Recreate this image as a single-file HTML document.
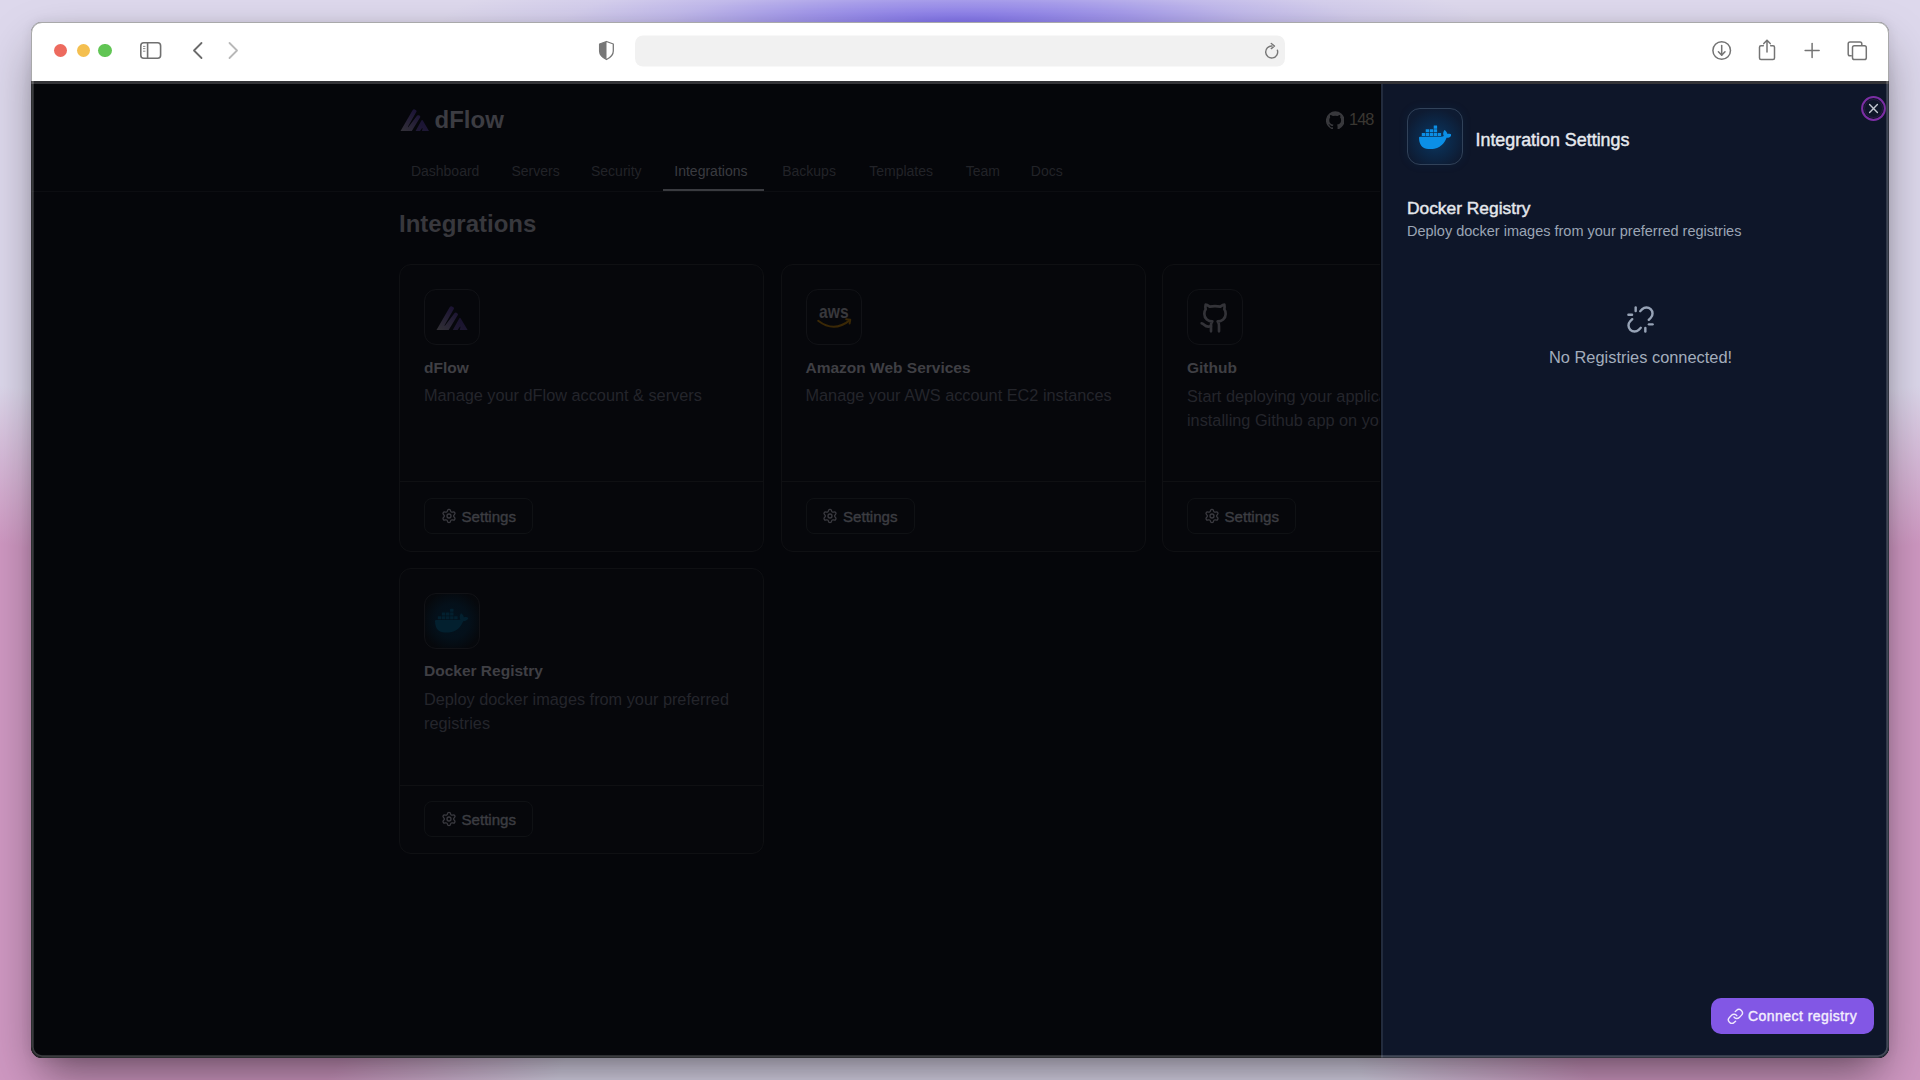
<!DOCTYPE html>
<html><head><meta charset="utf-8">
<style>
*{box-sizing:border-box;margin:0;padding:0}
html,body{width:1920px;height:1080px;overflow:hidden}
body{position:relative;font-family:"Liberation Sans",sans-serif;
background:
 radial-gradient(ellipse 560px 70px at 960px 24px, rgba(130,116,234,1) 0%, rgba(130,116,234,0.97) 6%, rgba(130,116,234,0.62) 32%, rgba(130,116,234,0.3) 52%, rgba(130,116,234,0.1) 71%, rgba(130,116,234,0) 93%),
 radial-gradient(ellipse 700px 520px at -100px 900px, rgba(207,152,194,1) 0%, rgba(207,152,194,1) 70%, rgba(207,152,194,0) 100%),
 radial-gradient(ellipse 700px 520px at 2020px 900px, rgba(207,152,194,1) 0%, rgba(207,152,194,1) 70%, rgba(207,152,194,0) 100%),
 #ddd8ec;
}
.abs{position:absolute}
.win{position:absolute;left:31px;top:22px;width:1858px;height:1036px;border-radius:11px;overflow:hidden;
 box-shadow:0 0 12px rgba(0,0,0,0.08), 0 22px 50px -6px rgba(0,0,0,0.4), 0 30px 30px -20px rgba(0,0,0,0.12);background:#05060a}
.inner{position:absolute;left:-31px;top:-22px;width:1920px;height:1080px}
.frame{position:absolute;left:31px;top:21.6px;width:1858px;height:1036.6px;border-radius:11px;border:1.4px solid rgba(83,83,86,0.5);box-shadow:inset 0 0 0 1.7px rgba(255,255,255,0.22);pointer-events:none}
.t{position:absolute;white-space:nowrap;line-height:1}
</style></head>
<body>
<div class="win"><div class="inner">
<div class="abs" style="left:0;top:0;width:1920px;height:81px;background:#fff"></div>
<div class="abs" style="left:0;top:81px;width:1920px;height:3px;background:#343438"></div>
<div class="abs" style="left:0;top:84px;width:1920px;height:1000px;background:#05060a"></div>
<div class="abs" style="left:54.3px;top:43.9px;width:13.2px;height:13.2px;border-radius:50%;background:#ed6a5e"></div>
<div class="abs" style="left:76.5px;top:43.9px;width:13.2px;height:13.2px;border-radius:50%;background:#f4bf4f"></div>
<div class="abs" style="left:98.4px;top:43.9px;width:13.2px;height:13.2px;border-radius:50%;background:#61c554"></div>
<svg class="abs" style="left:0;top:0" width="1920" height="81" viewBox="0 0 1920 81" fill="none">
 <rect x="140.8" y="42.8" width="19.8" height="15.4" rx="3" stroke="#707070" stroke-width="1.6"/>
 <line x1="147.6" y1="42.8" x2="147.6" y2="58.2" stroke="#707070" stroke-width="1.6"/>
 <line x1="143" y1="46.4" x2="145.4" y2="46.4" stroke="#808080" stroke-width="0.9"/>
 <line x1="143" y1="48.6" x2="145.4" y2="48.6" stroke="#808080" stroke-width="0.9"/>
 <line x1="143" y1="51.2" x2="145.4" y2="51.2" stroke="#808080" stroke-width="0.9"/>
 <polyline points="201.5,43 194,50.5 201.5,58" stroke="#6b6b6b" stroke-width="1.8" stroke-linecap="round" stroke-linejoin="round"/>
 <polyline points="229.5,43 237,50.5 229.5,58" stroke="#b8b8b8" stroke-width="1.8" stroke-linecap="round" stroke-linejoin="round"/>
 <path d="M606.5 41.5 L613.3 44 V51 C613.3 55 610 57.8 606.5 59.5 C603 57.8 599.6 55 599.6 51 V44 Z" stroke="#777" stroke-width="1.3" stroke-linejoin="round"/>
 <path d="M606.5 41.5 L599.6 44 V51 C599.6 55 603 57.8 606.5 59.5 Z" fill="#777"/>
 <rect x="635" y="35.5" width="650" height="31" rx="8" fill="#f1f1f1"/>
 <path d="M1277.4 50.2 A6 6 0 1 1 1272 46" stroke="#777" stroke-width="1.4" stroke-linecap="round"/>
 <polyline points="1271.3,43.5 1274.5,46 1271.3,48.6" stroke="#777" stroke-width="1.4" stroke-linecap="round" stroke-linejoin="round"/>
 <circle cx="1721.7" cy="50.5" r="8.8" stroke="#747474" stroke-width="1.5"/>
 <line x1="1721.7" y1="45.5" x2="1721.7" y2="55" stroke="#747474" stroke-width="1.5" stroke-linecap="round"/>
 <polyline points="1718.4,51.8 1721.7,55.1 1725,51.8" stroke="#747474" stroke-width="1.5" stroke-linecap="round" stroke-linejoin="round"/>
 <path d="M1763.3 45.8 H1761 A1.5 1.5 0 0 0 1759.5 47.3 V58 A1.5 1.5 0 0 0 1761 59.5 H1773 A1.5 1.5 0 0 0 1774.5 58 V47.3 A1.5 1.5 0 0 0 1773 45.8 H1770.7" stroke="#747474" stroke-width="1.5" stroke-linecap="round"/>
 <line x1="1767" y1="40.5" x2="1767" y2="52" stroke="#747474" stroke-width="1.5" stroke-linecap="round"/>
 <polyline points="1763.8,43.6 1767,40.3 1770.2,43.6" stroke="#747474" stroke-width="1.5" stroke-linecap="round" stroke-linejoin="round"/>
 <line x1="1812.1" y1="43.5" x2="1812.1" y2="57.5" stroke="#747474" stroke-width="1.5" stroke-linecap="round"/>
 <line x1="1805.1" y1="50.5" x2="1819.1" y2="50.5" stroke="#747474" stroke-width="1.5" stroke-linecap="round"/>
 <path d="M1851.8 55.7 H1850 A1.8 1.8 0 0 1 1848.2 53.9 V43.8 A1.8 1.8 0 0 1 1850 42 H1860 A1.8 1.8 0 0 1 1861.8 43.8 V45.5" stroke="#747474" stroke-width="1.5"/>
 <rect x="1852.5" y="45.8" width="13.8" height="13.7" rx="1.8" stroke="#747474" stroke-width="1.5"/>
</svg>
<svg class="abs" style="left:399.7px;top:108.6px" width="29.5" height="22.5" viewBox="0 0 32 24.3">
<defs><linearGradient id="lg1" x1="0" y1="1" x2="0.6" y2="0"><stop offset="0" stop-color="#333138"/><stop offset="1" stop-color="#1c1436"/></linearGradient>
<linearGradient id="lg2" x1="0" y1="1" x2="0.5" y2="0"><stop offset="0" stop-color="#1f1934"/><stop offset="1" stop-color="#1a1334"/></linearGradient></defs>
<path d="M0.3 24.3 L13.8 1.1 Q14.6 -0.1 16 0.4 L17.4 1.2 Q18.3 2 17.8 3 L8.6 19.3 Q8.4 20.1 9.1 19.6 L18.6 7.1 Q19.4 6.3 20.5 6.8 L21.5 7.4 Q22.3 8.1 21.8 9.1 L12.5 24.3 Z" fill="url(#lg1)"/>
<path d="M16.6 24.3 L23.4 12.2 Q24 11.3 24.6 12.2 L31.8 24.3 L23.7 24.3 L24.5 21 Q24.4 20.2 23.8 20.7 L21.4 24.3 Z" fill="url(#lg2)"/></svg>
<div class="t" style="left:434.5px;top:108px;font-size:24px;font-weight:700;color:#3c3c42;">dFlow</div>

<svg class="abs" style="left:1325.8px;top:110.6px" width="18.6" height="18.6" viewBox="0 0 24 24" fill="#38383c"><path d="M12 .3a12 12 0 0 0-3.8 23.4c.6.1.8-.3.8-.6v-2c-3.3.7-4-1.6-4-1.6-.6-1.4-1.4-1.8-1.4-1.8-1-.7.1-.7.1-.7 1.2.1 1.8 1.2 1.8 1.2 1 1.8 2.8 1.3 3.5 1 0-.8.4-1.3.7-1.6-2.7-.3-5.5-1.3-5.5-6 0-1.2.5-2.3 1.3-3.1-.2-.4-.6-1.6 0-3.2 0 0 1-.3 3.4 1.2a11.5 11.5 0 0 1 6 0c2.3-1.5 3.3-1.2 3.3-1.2.6 1.6.2 2.8 0 3.2.9.8 1.3 1.9 1.3 3.2 0 4.6-2.8 5.6-5.5 5.9.5.4.9 1 .9 2.2v3.3c0 .3.1.7.8.6A12 12 0 0 0 12 .3"/></svg>
<div class="t" style="left:1349.0px;top:111px;font-size:16.3px;font-weight:400;color:#3a3732;letter-spacing:-0.9px">148</div>

<div class="t" style="left:410.9px;top:164px;font-size:14px;font-weight:400;color:#222328;width:71.3px">Dashboard</div>

<div class="t" style="left:511.5px;top:164px;font-size:14px;font-weight:400;color:#222328;width:50.5px">Servers</div>

<div class="t" style="left:591.0px;top:164px;font-size:14px;font-weight:400;color:#222328;width:54.2px">Security</div>

<div class="t" style="left:674.3px;top:164px;font-size:14px;font-weight:400;color:#3a3b40;width:79.2px">Integrations</div>

<div class="t" style="left:782.2px;top:164px;font-size:14px;font-weight:400;color:#222328;width:57.8px">Backups</div>

<div class="t" style="left:869.2px;top:164px;font-size:14px;font-weight:400;color:#222328;width:67.5px">Templates</div>

<div class="t" style="left:965.8px;top:164px;font-size:14px;font-weight:400;color:#222328;width:35.9px">Team</div>

<div class="t" style="left:1030.8px;top:164px;font-size:14px;font-weight:400;color:#222328;width:33.7px">Docs</div>

<div class="abs" style="left:31px;top:190.5px;width:1350px;height:1px;background:#0c0d11"></div>
<div class="abs" style="left:663px;top:189.3px;width:101px;height:2.2px;background:#3a3b40"></div>
<div class="t" style="left:399.0px;top:212px;font-size:24px;font-weight:700;color:#38383d;">Integrations</div>

<div class="abs" style="left:399px;top:264px;width:365px;height:288px;border:1px solid #0f1013;border-radius:12px;background:#06070b"></div>
<div class="abs" style="left:399px;top:481px;width:365px;height:1px;background:#0f1013"></div>
<div class="abs" style="left:424px;top:289px;width:56px;height:56px;border:1px solid #111216;border-radius:12px;background:#06070b"></div>
<svg class="abs" style="left:435.9px;top:305.5px" width="32" height="24.3" viewBox="0 0 32 24.3">
<defs><linearGradient id="cg1" x1="0" y1="1" x2="0.6" y2="0"><stop offset="0" stop-color="#323136"/><stop offset="1" stop-color="#1c1433"/></linearGradient>
<linearGradient id="cg2" x1="0" y1="1" x2="0.5" y2="0"><stop offset="0" stop-color="#1f1a30"/><stop offset="1" stop-color="#19122f"/></linearGradient></defs>
<path d="M0.3 24.3 L13.8 1.1 Q14.6 -0.1 16 0.4 L17.4 1.2 Q18.3 2 17.8 3 L8.6 19.3 Q8.4 20.1 9.1 19.6 L18.6 7.1 Q19.4 6.3 20.5 6.8 L21.5 7.4 Q22.3 8.1 21.8 9.1 L12.5 24.3 Z" fill="url(#cg1)"/>
<path d="M16.6 24.3 L23.4 12.2 Q24 11.3 24.6 12.2 L31.8 24.3 L23.7 24.3 L24.5 21 Q24.4 20.2 23.8 20.7 L21.4 24.3 Z" fill="url(#cg2)"/></svg>
<div class="t" style="left:424.0px;top:360px;font-size:15.5px;font-weight:700;color:#3f3f44;">dFlow</div>
<div class="t" style="left:424.0px;top:387px;font-size:16.3px;font-weight:400;color:#24252b;">Manage your dFlow account &amp; servers</div>
<div class="abs" style="left:424px;top:497.8px;width:109px;height:36px;border:1px solid #0f1114;border-radius:8px"></div>
<svg class="abs" style="left:440.5px;top:507.8px" width="16" height="16" viewBox="0 0 24 24" fill="none" stroke="#3a3a40" stroke-width="2" stroke-linecap="round" stroke-linejoin="round"><path d="M9.671 4.136a2.34 2.34 0 0 1 4.659 0 2.34 2.34 0 0 0 3.319 1.915 2.34 2.34 0 0 1 2.33 4.033 2.34 2.34 0 0 0 0 3.831 2.34 2.34 0 0 1-2.33 4.033 2.34 2.34 0 0 0-3.319 1.915 2.34 2.34 0 0 1-4.659 0 2.34 2.34 0 0 0-3.32-1.915 2.34 2.34 0 0 1-2.33-4.033 2.34 2.34 0 0 0 0-3.831A2.34 2.34 0 0 1 6.35 6.051a2.34 2.34 0 0 0 3.319-1.915"/><circle cx="12" cy="12" r="3"/></svg>
<div class="t" style="left:461.5px;top:509px;font-size:15.1px;font-weight:400;color:#3c3d42;-webkit-text-stroke:0.4px #3c3d42">Settings</div>

<div class="abs" style="left:780.5px;top:264px;width:365px;height:288px;border:1px solid #0f1013;border-radius:12px;background:#06070b"></div>
<div class="abs" style="left:780.5px;top:481px;width:365px;height:1px;background:#0f1013"></div>
<div class="abs" style="left:805.5px;top:289px;width:56px;height:56px;border:1px solid #111216;border-radius:12px;background:#06070b"></div>
<svg class="abs" style="left:815px;top:303px" width="38" height="28" viewBox="0 0 38 28">
<text x="4.1" y="14.8" font-family="Liberation Sans" font-weight="700" font-size="19" fill="#38383c" textLength="29.5" lengthAdjust="spacingAndGlyphs">aws</text>
<path d="M3.2 17.8 Q19 30 34.6 17.4" stroke="#3a2806" stroke-width="2" fill="none" stroke-linecap="round"/>
<path d="M31.2 16.3 L35.3 16.8 L34.6 20.6" stroke="#3a2806" stroke-width="1.9" fill="none" stroke-linecap="round" stroke-linejoin="round"/>
</svg>
<div class="t" style="left:805.5px;top:360px;font-size:15.5px;font-weight:700;color:#3f3f44;">Amazon Web Services</div>
<div class="t" style="left:805.5px;top:387px;font-size:16.3px;font-weight:400;color:#24252b;">Manage your AWS account EC2 instances</div>
<div class="abs" style="left:805.5px;top:497.8px;width:109px;height:36px;border:1px solid #0f1114;border-radius:8px"></div>
<svg class="abs" style="left:822.0px;top:507.8px" width="16" height="16" viewBox="0 0 24 24" fill="none" stroke="#3a3a40" stroke-width="2" stroke-linecap="round" stroke-linejoin="round"><path d="M9.671 4.136a2.34 2.34 0 0 1 4.659 0 2.34 2.34 0 0 0 3.319 1.915 2.34 2.34 0 0 1 2.33 4.033 2.34 2.34 0 0 0 0 3.831 2.34 2.34 0 0 1-2.33 4.033 2.34 2.34 0 0 0-3.319 1.915 2.34 2.34 0 0 1-4.659 0 2.34 2.34 0 0 0-3.32-1.915 2.34 2.34 0 0 1-2.33-4.033 2.34 2.34 0 0 0 0-3.831A2.34 2.34 0 0 1 6.35 6.051a2.34 2.34 0 0 0 3.319-1.915"/><circle cx="12" cy="12" r="3"/></svg>
<div class="t" style="left:843.0px;top:509px;font-size:15.1px;font-weight:400;color:#3c3d42;-webkit-text-stroke:0.4px #3c3d42">Settings</div>

<div class="abs" style="left:1162px;top:264px;width:365px;height:288px;border:1px solid #0f1013;border-radius:12px;background:#06070b"></div>
<div class="abs" style="left:1162px;top:481px;width:365px;height:1px;background:#0f1013"></div>
<div class="abs" style="left:1187px;top:289px;width:56px;height:56px;border:1px solid #111216;border-radius:12px;background:#06070b"></div>
<svg class="abs" style="left:1199.2px;top:301.6px" width="32" height="32" viewBox="0 0 24 24" fill="none" stroke="#333338" stroke-width="2" stroke-linecap="round" stroke-linejoin="round"><path d="M15 22v-4a4.8 4.8 0 0 0-1-3.5c3 0 6-2 6-5.5.08-1.25-.27-2.48-1-3.5.28-1.15.28-2.35 0-3.5 0 0-1 0-3 1.5-2.64-.5-5.36-.5-8 0C6 2 5 2 5 2c-.3 1.15-.3 2.35 0 3.5A5.403 5.403 0 0 0 4 9c0 3.5 3 5.5 6 5.5-.39.49-.68 1.05-.85 1.65-.17.6-.22 1.23-.15 1.85v4"/><path d="M9 18c-4.51 2-5-2-7-2"/></svg>
<div class="t" style="left:1187.0px;top:360px;font-size:15.5px;font-weight:700;color:#3f3f44;">Github</div>
<div class="t" style="left:1187.0px;top:388px;font-size:16.3px;font-weight:400;color:#24252b;">Start deploying your applications by</div>
<div class="t" style="left:1187.0px;top:412px;font-size:16.3px;font-weight:400;color:#24252b;">installing Github app on your account</div>
<div class="abs" style="left:1187px;top:497.8px;width:109px;height:36px;border:1px solid #0f1114;border-radius:8px"></div>
<svg class="abs" style="left:1203.5px;top:507.8px" width="16" height="16" viewBox="0 0 24 24" fill="none" stroke="#3a3a40" stroke-width="2" stroke-linecap="round" stroke-linejoin="round"><path d="M9.671 4.136a2.34 2.34 0 0 1 4.659 0 2.34 2.34 0 0 0 3.319 1.915 2.34 2.34 0 0 1 2.33 4.033 2.34 2.34 0 0 0 0 3.831 2.34 2.34 0 0 1-2.33 4.033 2.34 2.34 0 0 0-3.319 1.915 2.34 2.34 0 0 1-4.659 0 2.34 2.34 0 0 0-3.32-1.915 2.34 2.34 0 0 1-2.33-4.033 2.34 2.34 0 0 0 0-3.831A2.34 2.34 0 0 1 6.35 6.051a2.34 2.34 0 0 0 3.319-1.915"/><circle cx="12" cy="12" r="3"/></svg>
<div class="t" style="left:1224.5px;top:509px;font-size:15.1px;font-weight:400;color:#3c3d42;-webkit-text-stroke:0.4px #3c3d42">Settings</div>

<div class="abs" style="left:399px;top:567.8px;width:365px;height:286.5px;border:1px solid #0f1013;border-radius:12px;background:#06070b"></div>
<div class="abs" style="left:399px;top:785px;width:365px;height:1px;background:#0f1013"></div>
<div class="abs" style="left:424px;top:592.8px;width:56px;height:56px;border:1px solid #111216;border-radius:12px;background:radial-gradient(circle at 50% 50%, #03131f 0%, #04101a 45%, #06080c 80%)"></div>
<svg class="abs" style="left:435.4px;top:603.9px" width="33.3" height="33.3" viewBox="0 0 24 24" fill="#03202f"><path d="M13.983 11.078h2.119a.186.186 0 00.186-.185V9.006a.186.186 0 00-.186-.186h-2.119a.185.185 0 00-.185.185v1.888c0 .102.083.185.185.185m-2.954-5.43h2.118a.186.186 0 00.186-.186V3.574a.186.186 0 00-.186-.185h-2.118a.185.185 0 00-.185.185v1.888c0 .102.082.185.185.185m0 2.716h2.118a.187.187 0 00.186-.186V6.29a.186.186 0 00-.186-.185h-2.118a.185.185 0 00-.185.185v1.887c0 .102.082.185.185.186m-2.93 0h2.12a.186.186 0 00.184-.186V6.29a.185.185 0 00-.185-.185H8.1a.185.185 0 00-.185.185v1.887c0 .102.083.185.185.186m-2.964 0h2.119a.186.186 0 00.185-.186V6.29a.185.185 0 00-.185-.185H5.136a.186.186 0 00-.186.185v1.887c0 .102.084.185.186.186m5.893 2.715h2.118a.186.186 0 00.186-.185V9.006a.186.186 0 00-.186-.186h-2.118a.185.185 0 00-.185.185v1.888c0 .102.082.185.185.185m-2.93 0h2.12a.185.185 0 00.184-.185V9.006a.185.185 0 00-.184-.186h-2.12a.185.185 0 00-.184.185v1.888c0 .102.083.185.185.185m-2.964 0h2.119a.185.185 0 00.185-.185V9.006a.185.185 0 00-.184-.186h-2.12a.186.186 0 00-.186.186v1.887c0 .102.084.185.186.185m-2.92 0h2.12a.185.185 0 00.184-.185V9.006a.185.185 0 00-.184-.186h-2.12a.185.185 0 00-.184.185v1.888c0 .102.082.185.185.185M23.763 9.89c-.065-.051-.672-.51-1.954-.51-.338.001-.676.03-1.01.087-.248-1.7-1.653-2.53-1.716-2.566l-.344-.199-.226.327c-.284.438-.49.922-.612 1.43-.23.97-.09 1.882.403 2.661-.595.332-1.55.413-1.744.42H.751a.751.751 0 00-.75.748 11.376 11.376 0 00.692 4.062c.545 1.428 1.355 2.48 2.41 3.124 1.18.723 3.1 1.137 5.275 1.137.983.003 1.963-.086 2.93-.266a12.248 12.248 0 003.823-1.389c.98-.567 1.86-1.288 2.61-2.136 1.252-1.418 1.998-2.997 2.553-4.4h.221c1.372 0 2.215-.549 2.68-1.009.309-.293.55-.65.707-1.046l.098-.288Z"/></svg>
<div class="t" style="left:424.0px;top:663px;font-size:15.5px;font-weight:700;color:#3f3f44;">Docker Registry</div>
<div class="t" style="left:424.0px;top:691px;font-size:16.3px;font-weight:400;color:#24252b;">Deploy docker images from your preferred</div>
<div class="t" style="left:424.0px;top:715px;font-size:16.3px;font-weight:400;color:#24252b;">registries</div>
<div class="abs" style="left:424px;top:801.1999999999999px;width:109px;height:36px;border:1px solid #0f1114;border-radius:8px"></div>
<svg class="abs" style="left:440.5px;top:811.1999999999999px" width="16" height="16" viewBox="0 0 24 24" fill="none" stroke="#3a3a40" stroke-width="2" stroke-linecap="round" stroke-linejoin="round"><path d="M9.671 4.136a2.34 2.34 0 0 1 4.659 0 2.34 2.34 0 0 0 3.319 1.915 2.34 2.34 0 0 1 2.33 4.033 2.34 2.34 0 0 0 0 3.831 2.34 2.34 0 0 1-2.33 4.033 2.34 2.34 0 0 0-3.319 1.915 2.34 2.34 0 0 1-4.659 0 2.34 2.34 0 0 0-3.32-1.915 2.34 2.34 0 0 1-2.33-4.033 2.34 2.34 0 0 0 0-3.831A2.34 2.34 0 0 1 6.35 6.051a2.34 2.34 0 0 0 3.319-1.915"/><circle cx="12" cy="12" r="3"/></svg>
<div class="t" style="left:461.5px;top:812px;font-size:15.1px;font-weight:400;color:#3c3d42;-webkit-text-stroke:0.4px #3c3d42">Settings</div>

<div class="abs" style="left:1379.5px;top:84px;width:1.5px;height:1000px;background:#020307"></div>
<div class="abs" style="left:1381px;top:84px;width:2px;height:1000px;background:#222b3d"></div>
<div class="abs" style="left:1383px;top:84px;width:540px;height:1000px;background:#0e1629"></div>
<div class="abs" style="left:1407px;top:108px;width:56px;height:56.5px;border-radius:13px;border:1.3px solid #314259;background:radial-gradient(circle at 50% 55%, #0d3a62 0%, #0b2a4c 35%, #0e1b32 75%);box-shadow:0 0 10px rgba(20,80,150,0.12)"></div>
<svg class="abs" style="left:1418.75px;top:120.5px" width="32.6" height="32.6" viewBox="0 0 24 24" fill="#0b8fe6"><path d="M13.983 11.078h2.119a.186.186 0 00.186-.185V9.006a.186.186 0 00-.186-.186h-2.119a.185.185 0 00-.185.185v1.888c0 .102.083.185.185.185m-2.954-5.43h2.118a.186.186 0 00.186-.186V3.574a.186.186 0 00-.186-.185h-2.118a.185.185 0 00-.185.185v1.888c0 .102.082.185.185.185m0 2.716h2.118a.187.187 0 00.186-.186V6.29a.186.186 0 00-.186-.185h-2.118a.185.185 0 00-.185.185v1.887c0 .102.082.185.185.186m-2.93 0h2.12a.186.186 0 00.184-.186V6.29a.185.185 0 00-.185-.185H8.1a.185.185 0 00-.185.185v1.887c0 .102.083.185.185.186m-2.964 0h2.119a.186.186 0 00.185-.186V6.29a.185.185 0 00-.185-.185H5.136a.186.186 0 00-.186.185v1.887c0 .102.084.185.186.186m5.893 2.715h2.118a.186.186 0 00.186-.185V9.006a.186.186 0 00-.186-.186h-2.118a.185.185 0 00-.185.185v1.888c0 .102.082.185.185.185m-2.93 0h2.12a.185.185 0 00.184-.185V9.006a.185.185 0 00-.184-.186h-2.12a.185.185 0 00-.184.185v1.888c0 .102.083.185.185.185m-2.964 0h2.119a.185.185 0 00.185-.185V9.006a.185.185 0 00-.184-.186h-2.12a.186.186 0 00-.186.186v1.887c0 .102.084.185.186.185m-2.92 0h2.12a.185.185 0 00.184-.185V9.006a.185.185 0 00-.184-.186h-2.12a.185.185 0 00-.184.185v1.888c0 .102.082.185.185.185M23.763 9.89c-.065-.051-.672-.51-1.954-.51-.338.001-.676.03-1.01.087-.248-1.7-1.653-2.53-1.716-2.566l-.344-.199-.226.327c-.284.438-.49.922-.612 1.43-.23.97-.09 1.882.403 2.661-.595.332-1.55.413-1.744.42H.751a.751.751 0 00-.75.748 11.376 11.376 0 00.692 4.062c.545 1.428 1.355 2.48 2.41 3.124 1.18.723 3.1 1.137 5.275 1.137.983.003 1.963-.086 2.93-.266a12.248 12.248 0 003.823-1.389c.98-.567 1.86-1.288 2.61-2.136 1.252-1.418 1.998-2.997 2.553-4.4h.221c1.372 0 2.215-.549 2.68-1.009.309-.293.55-.65.707-1.046l.098-.288Z"/></svg>
<div class="t" style="left:1475.5px;top:132px;font-size:17.87px;font-weight:400;color:#e6e9ee;-webkit-text-stroke:0.45px #e6e9ee">Integration Settings</div>

<svg class="abs" style="left:1860px;top:94.5px" width="27" height="27" viewBox="0 0 27 27" fill="none"><circle cx="13.5" cy="13.5" r="11.4" stroke="#7b2ea3" stroke-width="2"/><circle cx="13.5" cy="13.5" r="9" stroke="#3a1f55" stroke-width="0.6"/><path d="M9.6 9.6 L17.4 17.4 M17.4 9.6 L9.6 17.4" stroke="#bfc4ce" stroke-width="1.4" stroke-linecap="round"/></svg>
<div class="t" style="left:1407.0px;top:200px;font-size:17.38px;font-weight:400;color:#e4e7ec;-webkit-text-stroke:0.45px #e4e7ec">Docker Registry</div>

<div class="t" style="left:1407.0px;top:224px;font-size:14.5px;font-weight:400;color:#9ba5b5;">Deploy docker images from your preferred registries</div>

<svg class="abs" style="left:1626px;top:305.2px" width="29" height="29" viewBox="0 0 24 24" fill="none" stroke="#97a3b6" stroke-width="2" stroke-linecap="round" stroke-linejoin="round"><path d="m18.84 12.25 1.72-1.71h-.02a5.004 5.004 0 0 0-.12-7.07 5.006 5.006 0 0 0-6.95 0l-1.72 1.71"/><path d="m5.17 11.75-1.71 1.71a5.004 5.004 0 0 0 .12 7.07 5.006 5.006 0 0 0 6.95 0l1.71-1.71"/><line x1="8" x2="8" y1="2" y2="5"/><line x1="2" x2="5" y1="8" y2="8"/><line x1="16" x2="16" y1="19" y2="22"/><line x1="19" x2="22" y1="16" y2="16"/></svg>
<div class="t" style="left:1549.0px;top:349px;font-size:16.4px;font-weight:400;color:#a3adbc;">No Registries connected!</div>

<div class="abs" style="left:1711px;top:998px;width:163px;height:36px;border-radius:10px;background:#8257e5"></div>
<svg class="abs" style="left:1726.8px;top:1007.6px" width="16.8" height="16.8" viewBox="0 0 24 24" fill="none" stroke="#efe8fd" stroke-width="2" stroke-linecap="round" stroke-linejoin="round"><path d="M10 13a5 5 0 0 0 7.54.54l3-3a5 5 0 0 0-7.07-7.07l-1.72 1.71"/><path d="M14 11a5 5 0 0 0-7.54-.54l-3 3a5 5 0 0 0 7.07 7.07l1.71-1.71"/></svg>
<div class="t" style="left:1748.0px;top:1009px;font-size:14px;font-weight:400;color:#f3eefe;-webkit-text-stroke:0.4px #f3eefe;letter-spacing:0.45px">Connect registry</div>

</div></div>
<div class="frame"></div>
</body></html>
